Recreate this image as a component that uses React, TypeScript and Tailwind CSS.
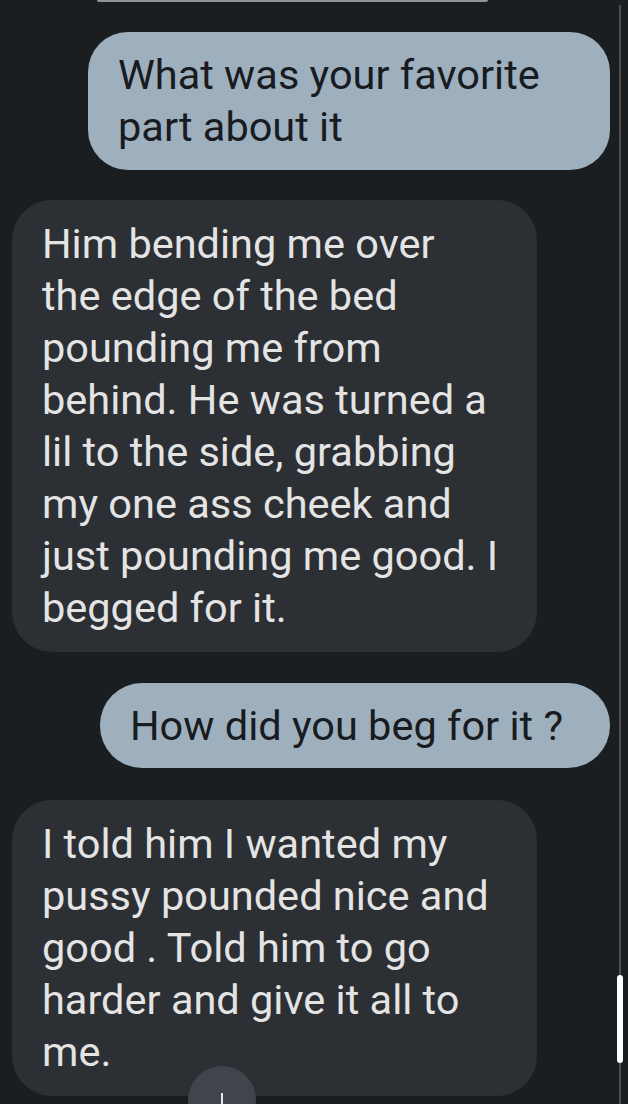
import React from 'react';

const incoming1 = [
  'Him bending me over',
  'the edge of the bed',
  'pounding me from',
  'behind. He was turned a',
  'lil to the side, grabbing',
  'my one ass cheek and',
  'just pounding me good. I',
  'begged for it.',
];

const incoming2 = [
  'I told him I wanted my',
  'pussy pounded nice and',
  'good . Told him to go',
  'harder and give it all to',
  'me.',
];

export default function App() {
  return (
    <div
      className="relative w-[628px] h-[1104px] overflow-hidden bg-[#1b1e21]"
      style={{ fontFamily: 'Roboto, "Noto Sans", sans-serif' }}
    >
      {/* bottom edge of the previous bubble */}
      <div className="ml-[97px] mr-[140px] h-[2px] rounded-b-full bg-[#8d959c]" />

      <div className="flex flex-col">
        <div className="ml-[88px] mr-[18px] mt-[30px] rounded-[40px] bg-[#9eb0bd] pl-[30px] pr-[20px] py-[17px] text-[41.5px] leading-[52px] text-[#181b1f]">
          <div className="whitespace-nowrap">What was your favorite</div>
          <div className="whitespace-nowrap">part about it</div>
        </div>

        <Incoming lines={incoming1} className="mt-[30px]" />

        <div className="ml-[100px] mr-[18px] mt-[31px] rounded-[42px] bg-[#9eb0bd] pl-[30px] pr-[20px] py-[16px] text-[41.5px] leading-[53px] text-[#181b1f]">
          <div className="whitespace-nowrap">How did you beg for it ?</div>
        </div>

        <Incoming lines={incoming2} className="mt-[32px]" />
      </div>

      {/* scrollbar */}
      <div className="absolute right-[7px] top-[5px] bottom-0 w-[2px] bg-[#4a4e53]" />
      <div className="absolute right-[5px] top-[975px] h-[88px] w-[6px] rounded-full bg-white" />

      {/* scroll-to-bottom button */}
      <div className="absolute left-[188px] top-[1066px] flex h-[68px] w-[68px] justify-center rounded-full bg-[#40454b]">
        <div className="mt-[27px] h-[20px] w-[2px] bg-[#e8e8e8]" />
      </div>
    </div>
  );
}

function Incoming({ lines, className }: { lines: string[]; className?: string }) {
  return (
    <div
      className={`ml-[12px] w-[525px] rounded-[40px] bg-[#2c2f33] pl-[30px] pr-[10px] py-[18px] text-[41.5px] leading-[52px] text-[#e4e4e4] ${className ?? ''}`}
    >
      {lines.map((l) => (
        <div key={l} className="whitespace-nowrap">
          {l}
        </div>
      ))}
    </div>
  );
}
